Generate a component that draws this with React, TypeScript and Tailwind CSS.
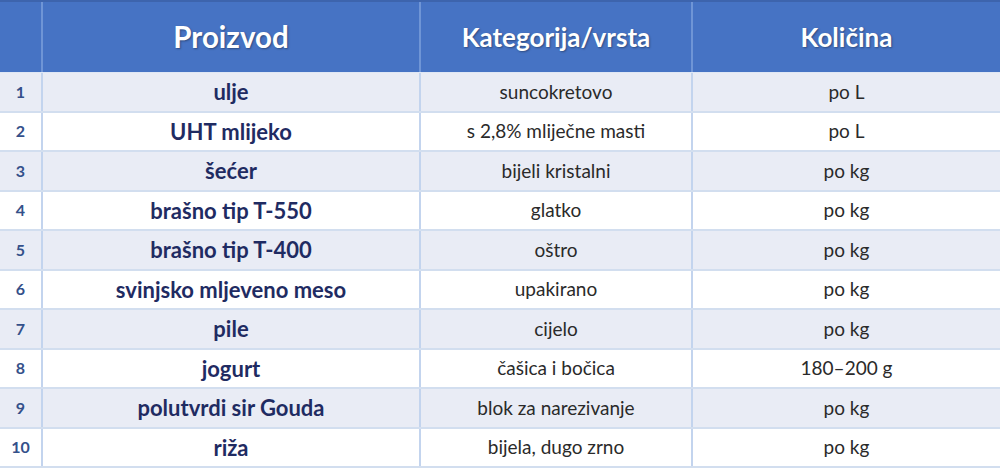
const rows = [
  { n: "1", name: "ulje", cat: "suncokretovo", qty: "po L" },
  { n: "2", name: "UHT mlijeko", cat: "s 2,8% mliječne masti", qty: "po L" },
  { n: "3", name: "šećer", cat: "bijeli kristalni", qty: "po kg" },
  { n: "4", name: "brašno tip T-550", cat: "glatko", qty: "po kg" },
  { n: "5", name: "brašno tip T-400", cat: "oštro", qty: "po kg" },
  { n: "6", name: "svinjsko mljeveno meso", cat: "upakirano", qty: "po kg" },
  { n: "7", name: "pile", cat: "cijelo", qty: "po kg" },
  { n: "8", name: "jogurt", cat: "čašica i bočica", qty: "180–200 g" },
  { n: "9", name: "polutvrdi sir Gouda", cat: "blok za narezivanje", qty: "po kg" },
  { n: "10", name: "riža", cat: "bijela, dugo zrno", qty: "po kg" },
];

const cols = "grid grid-cols-[43px_378px_272px_307px]";

export default function App() {
  return (
    <div className="w-[1000px] h-[468px] overflow-hidden bg-white font-['Lato',sans-serif]">
      <div className={`${cols} h-[73px] bg-[#4673c4] border-t-2 border-[#3d64ad] border-b border-b-[#dfe7f5] text-white font-bold [text-shadow:1px_1px_2px_rgba(0,0,0,0.35)]`}>
        <div className="border-r-2 border-[#6f95d6]"></div>
        <div className="flex items-center justify-center border-r-2 border-[#6f95d6] text-[29.5px]">Proizvod</div>
        <div className="flex items-center justify-center border-r-2 border-[#6f95d6] text-[26px]">Kategorija/vrsta</div>
        <div className="flex items-center justify-center text-[26px]">Količina</div>
      </div>
      {rows.map((r, i) => (
        <div
          key={r.n}
          className={`${cols} h-[39.5px] border-b-2 border-[#d2deef] ${i % 2 === 0 ? "bg-[#e9ecf5]" : "bg-white"}`}
        >
          <div className="flex items-center justify-center border-r-2 border-[#c3d4ee] text-[16px] font-bold text-[#34508a]">{r.n}</div>
          <div className="flex items-center justify-center border-r-2 border-[#c3d4ee] text-[22px] font-bold text-[#1f2b62]">{r.name}</div>
          <div className="flex items-center justify-center border-r-2 border-[#c3d4ee] text-[19px] text-[#2a2a2a]">{r.cat}</div>
          <div className="flex items-center justify-center text-[19px] text-[#2a2a2a]">{r.qty}</div>
        </div>
      ))}
    </div>
  );
}
